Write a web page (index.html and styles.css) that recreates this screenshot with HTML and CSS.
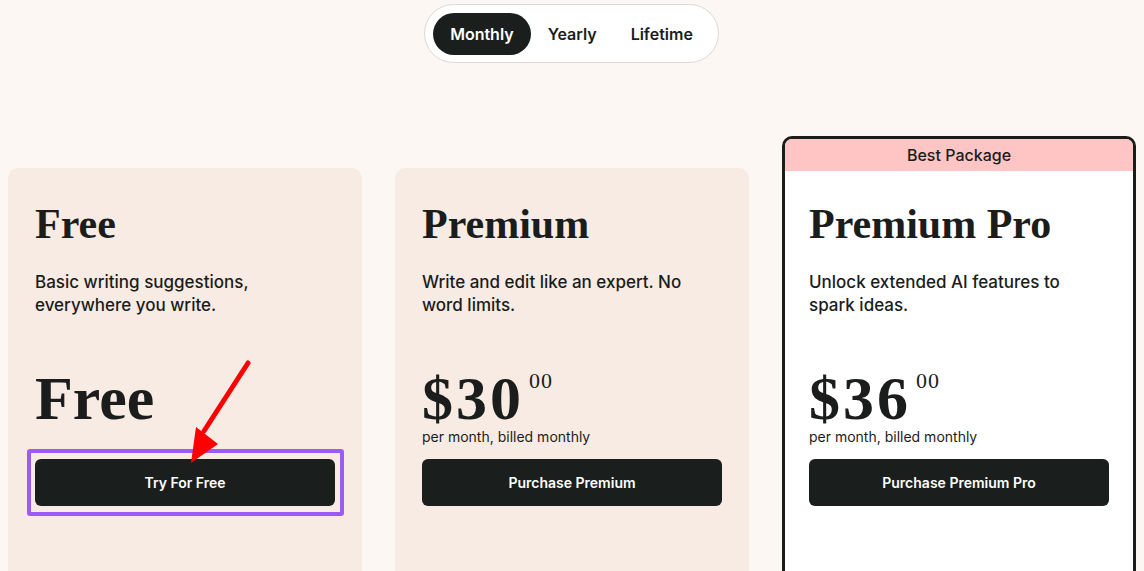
FILE: index.html
```html
<!DOCTYPE html>
<html lang="en">
<head>
<meta charset="utf-8">
<title>Pricing</title>
<link rel="stylesheet" href="styles.css">
</head>
<body>
<div class="page">
  <div class="toggle-wrap">
    <div class="toggle">
      <span class="opt active">Monthly</span>
      <span class="opt">Yearly</span>
      <span class="opt">Lifetime</span>
    </div>
  </div>
  <div class="plans">
    <div class="card plain">
      <div class="body">
        <h2 class="title">Free</h2>
        <p class="desc">Basic writing suggestions, everywhere you write.</p>
        <div class="price-block">
          <div class="price">Free</div>
        </div>
        <button class="btn">Try For Free</button>
      </div>
      <div class="highlight"></div>
      <svg class="arrow" width="80" height="120" viewBox="0 0 80 120">
        <line x1="72" y1="8" x2="28" y2="76" stroke="#ff0000" stroke-width="5" stroke-linecap="round"/>
        <polygon points="15,108 20,72 42,89" fill="#ff0000"/>
      </svg>
    </div>
    <div class="card plain">
      <div class="body">
        <h2 class="title">Premium</h2>
        <p class="desc">Write and edit like an expert. No word limits.</p>
        <div class="price-block">
          <div class="price"><span class="amount">$30</span><span class="cents">00</span></div>
          <div class="per">per month, billed monthly</div>
        </div>
        <button class="btn">Purchase Premium</button>
      </div>
    </div>
    <div class="card best">
      <div class="badge">Best Package</div>
      <div class="body">
        <h2 class="title">Premium Pro</h2>
        <p class="desc">Unlock extended AI features to spark ideas.</p>
        <div class="price-block">
          <div class="price"><span class="amount">$36</span><span class="cents">00</span></div>
          <div class="per">per month, billed monthly</div>
        </div>
        <button class="btn">Purchase Premium Pro</button>
      </div>
    </div>
  </div>
</div>
</body>
</html>
```

FILE: styles.css
```css
* { box-sizing: border-box; }
html, body {
  margin: 0;
  height: 100%;
  overflow: hidden;
  background: #fdf7f4;
}
body {
  font-family: Inter, "Noto Sans", sans-serif;
  color: #1a1d1b;
}
.page {
  padding: 4px 9px 0 8px;
}
.toggle-wrap {
  display: flex;
  justify-content: center;
}
.toggle {
  display: flex;
  align-items: center;
  padding: 8px;
  border: 1px solid #dcd8d6;
  border-radius: 30px;
  background: #fff;
  height: 59px;
}
.opt {
  display: flex;
  align-items: center;
  height: 42px;
  padding: 0 17px;
  border-radius: 21px;
  font-size: 16px;
  font-weight: 600;
  color: #1a1d1b;
}
.opt.active {
  background: #1a1e1c;
  color: #fff;
}
.plans {
  margin-top: 73px;
  display: grid;
  grid-template-columns: repeat(3, 354px);
  column-gap: 33px;
  align-items: start;
}
.card {
  position: relative;
  border-radius: 10px;
  height: 460px;
}
.card.plain {
  margin-top: 32px;
  background: #f8ebe3;
}
.card.plain .body {
  padding: 31px 27px 0;
}
.card.best {
  background: #fff;
  border: 3px solid #1b1d1b;
  overflow: hidden;
}
.badge {
  height: 32px;
  background: #ffc5c5;
  display: flex;
  align-items: center;
  justify-content: center;
  font-size: 16px;
  font-weight: 500;
}
.card.best .body {
  padding: 28px 24px 0;
}
.title {
  margin: 0;
  font-family: "Liberation Serif", "Times New Roman", serif;
  font-size: 42px;
  line-height: 50px;
  font-weight: 700;
}
.desc {
  margin: 22px 0 0;
  font-size: 17px;
  line-height: 23px;
  font-weight: 500;
  height: 46px;
}
.price-block {
  margin-top: 51px;
  height: 78px;
}
.price {
  font-family: "Liberation Serif", "Times New Roman", serif;
  font-size: 62px;
  line-height: 60px;
  font-weight: 700;
  display: flex;
  align-items: flex-start;
  height: 60px;
}
.amount {
  letter-spacing: 3px;
}
.cents {
  font-size: 22px;
  line-height: 20px;
  font-weight: 400;
  margin-left: 5px;
  margin-top: 3px;
  letter-spacing: 1px;
}
.per {
  font-size: 14px;
  line-height: 18px;
  font-weight: 400;
}
.btn {
  display: block;
  width: 100%;
  height: 47px;
  margin-top: 13px;
  border: 0;
  border-radius: 6px;
  background: #1a1e1c;
  color: #fff;
  font-family: Inter, "Noto Sans", sans-serif;
  font-size: 14px;
  font-weight: 600;
}
.highlight {
  position: absolute;
  left: 19px;
  top: 281px;
  width: 317px;
  height: 67px;
  border: 4px solid #9b5cf6;
  border-radius: 3px;
}
.arrow {
  position: absolute;
  left: 168px;
  top: 187px;
}
```
